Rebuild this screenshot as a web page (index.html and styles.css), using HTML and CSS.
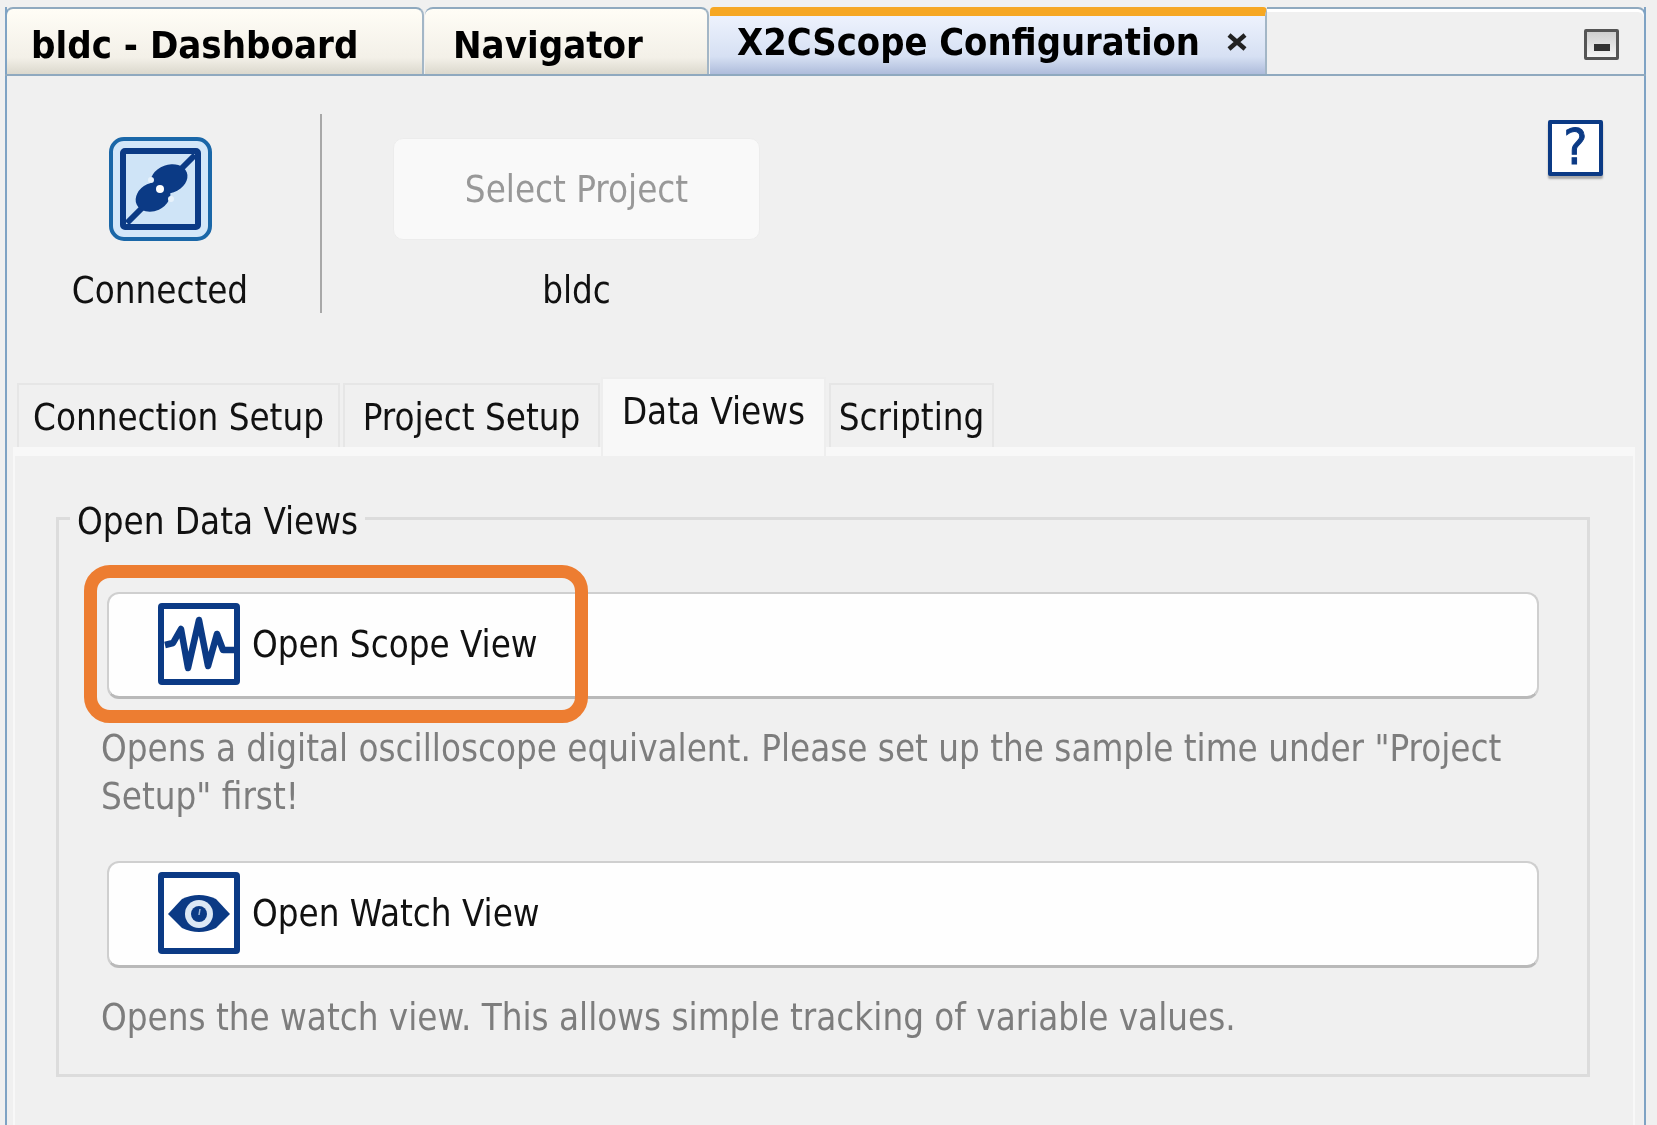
FILE: index.html
```html
<!DOCTYPE html>

<html>

<head>
	<meta http-equiv="content-type" content="text/html; charset=utf-8" />
	<title>X2CScope Configuration</title>
	<link rel="stylesheet" href="styles.css">
</head>

<body>
	<div class="window">
		<div class="tabstrip soft">
			<div class="doc-tab doc-tab-dash">bldc - Dashboard</div>
			<div class="doc-tab doc-tab-nav">Navigator</div>
			<div class="doc-tab doc-tab-active">
				<span>X2CScope Configuration</span>
				<svg class="close-icon" viewBox="0 0 22 18"><path d="M3 2 L19 16 M19 2 L3 16" /></svg>
			</div>
			<div class="strip-rest">
				<div class="minimize"><div class="minimize-dash"></div></div>
			</div>
		</div>

		<div class="toolbar soft">
			<div class="tool-col tool-connect">
				<svg class="connect-icon" viewBox="0 0 103 104">
					<rect x="2" y="2" width="99" height="100" rx="13" fill="#d3e7f9" stroke="#1a67a8" stroke-width="4" />
					<rect x="14" y="14" width="75" height="76" rx="2" fill="#cfe4f7" stroke="#0b3a85" stroke-width="6" />
					<path d="M18 86 L86 18" stroke="#0b3a85" stroke-width="6" />
					<ellipse cx="60" cy="42" rx="19" ry="14" transform="rotate(-20 60 42)" fill="#0b3a85" />
					<ellipse cx="44" cy="60" rx="18" ry="14" transform="rotate(-25 44 60)" fill="#0b3a85" />
					<circle cx="51" cy="52" r="4" fill="#fff" />
					<circle cx="42" cy="43" r="3" fill="#e8f2fb" />
					<circle cx="62" cy="62" r="3" fill="#e8f2fb" />
				</svg>
				<div class="tool-label">Connected</div>
			</div>
			<div class="tool-sep"></div>
			<div class="tool-col tool-project">
				<button class="select-btn" type="button">Select Project</button>
				<div class="tool-label">bldc</div>
			</div>
			<div class="help-icon">?</div>
		</div>

		<div class="subtabs soft">
			<div class="subtab subtab-conn">Connection Setup</div>
			<div class="subtab subtab-proj">Project Setup</div>
			<div class="subtab subtab-active">Data Views</div>
			<div class="subtab subtab-script">Scripting</div>
		</div>

		<div class="panel">
			<div class="group">
				<div class="legend soft">Open Data Views</div>

				<div class="view-row">
					<button class="view-btn soft" type="button">
						<svg class="view-icon" viewBox="0 0 82 82">
							<rect x="3" y="3" width="76" height="76" rx="1" fill="#fff" stroke="#0b3a85" stroke-width="6" />
							<path class="wave" d="M7 42 L15 40 L23 26 L30 65 L41 17 L50 63 L59 31 L65 47 L77 47" />
						</svg>
						<span>Open Scope View</span>
					</button>
					<div class="highlight"></div>
				</div>
				<p class="view-desc soft">Opens a digital oscilloscope equivalent. Please set up the sample time under "Project Setup" first!</p>

				<div class="view-row view-row-watch">
					<button class="view-btn soft" type="button">
						<svg class="view-icon" viewBox="0 0 82 82">
							<rect x="3" y="3" width="76" height="76" rx="1" fill="#fff" stroke="#0b3a85" stroke-width="6" />
							<path d="M10 42 L24 27 Q41 19 58 27 L72 42 L58 56 Q41 64 24 56 Z" fill="#0b3a85" />
							<circle cx="41" cy="42" r="14" fill="#dce8f5" />
							<circle cx="41" cy="42" r="8" fill="#0b3a85" />
							<path d="M42 37 L41 43" stroke="#9db8d8" stroke-width="1.5" />
						</svg>
						<span>Open Watch View</span>
					</button>
				</div>
				<p class="view-desc soft">Opens the watch view. This allows simple tracking of variable values.</p>
			</div>
		</div>
	</div>
</body>

</html>
```

FILE: styles.css
```css
html,
body {
	margin: 0;
	padding: 0;
	height: 1125px;
	overflow: hidden;
	background-color: #f0f0f0;
	font-family: "DejaVu Sans", sans-serif;
	font-stretch: condensed;
	font-size: 36.4px;
	color: #111;
}

/* The source is an enlarged capture, so everything but the callout is slightly soft */
.soft {
	filter: blur(0.7px);
}

/* Outer docked window */
.window {
	margin: 7px 11px 0 5px;
	height: 1118px;
	border-left: 2px solid #7fa3c4;
	border-right: 2px solid #7fa3c4;
	box-sizing: border-box;
}

/* Document tabs */
.tabstrip {
	display: flex;
	height: 67px;
	border-bottom: 2px solid #8fa9bf;
	margin-left: -2px;
	margin-right: -2px;
}

.doc-tab {
	display: flex;
	align-items: center;
	box-sizing: border-box;
	height: 67px;
	padding-top: 6px;
	font-size: 38px;
	font-weight: bold;
	color: #000;
	background: linear-gradient(#fffdf6, #f3f0e8 75%, #dbd8cd);
	border-top: 2px solid #8fa9bf;
	border-right: 2px solid #a3b6c6;
	border-radius: 8px 8px 0 0;
}

.doc-tab-dash {
	width: 419px;
	padding-left: 24px;
	border-left: 2px solid #7fa3c4;
}

.doc-tab-nav {
	width: 284px;
	margin-left: 1px;
	padding-left: 28px;
}

.doc-tab-active {
	width: 557px;
	margin-left: 1px;
	padding: 0 17px 6px 27px;
	justify-content: space-between;
	font-size: 37.7px;
	border-top: 9px solid #f6a723;
	border-radius: 4px 4px 0 0;
	background: linear-gradient(#edf2fd, #d6e0f3 70%, #aebcdb);
}

.close-icon {
	width: 22px;
	height: 18px;
	fill: none;
	stroke: #222;
	stroke-width: 4.5;
}

.strip-rest {
	flex: 1;
	display: flex;
	justify-content: flex-end;
	box-sizing: border-box;
	padding: 20px 25px 0 0;
	border-top: 2px solid #8fa9bf;
	border-right: 2px solid #7fa3c4;
	border-radius: 0 8px 0 0;
	box-shadow: inset 0 3px 0 #fff;
}

.minimize {
	display: flex;
	align-items: flex-end;
	justify-content: center;
	box-sizing: border-box;
	width: 35px;
	height: 31px;
	padding-bottom: 6px;
	border: 3px solid #555;
	border-radius: 2px;
	background: linear-gradient(#cfcfcf, #f5f5f5);
}

.minimize-dash {
	width: 16px;
	height: 7px;
	background-color: #333;
}

/* Connect and project toolbar */
.toolbar {
	position: relative;
	display: flex;
	height: 307px;
	padding-top: 38px;
	box-sizing: border-box;
}

.tool-col {
	display: flex;
	flex-direction: column;
	align-items: center;
}

.tool-connect {
	width: 313px;
	padding: 23px 7px 0 0;
	box-sizing: border-box;
}

.connect-icon {
	width: 103px;
	height: 104px;
}

.tool-label {
	height: 40px;
	line-height: 40px;
	margin-top: 30px;
}

.tool-sep {
	width: 2px;
	height: 199px;
	background-color: #a8a8a8;
}

.tool-project {
	margin-left: 71px;
	padding-top: 24px;
}

.select-btn {
	width: 367px;
	height: 102px;
	background-color: #f9f9f9;
	border: 1px solid #ececec;
	border-radius: 10px;
	font: inherit;
	color: #989898;
}

.tool-project .tool-label {
	margin-top: 31px;
}

.help-icon {
	position: absolute;
	top: 44px;
	right: 41px;
	box-sizing: border-box;
	width: 55px;
	height: 56px;
	background-color: #fff;
	border: 4px solid #0b3a85;
	border-radius: 2px;
	box-shadow: 0 3px 2px #aaa;
	font-size: 50px;
	-webkit-text-stroke: 1px #0b3a85;
	line-height: 46px;
	text-align: center;
	color: #0b3a85;
}

/* Inner tabs */
.subtabs {
	display: flex;
	align-items: flex-end;
	height: 64px;
	padding-left: 10px;
}

.subtab {
	box-sizing: border-box;
	height: 64px;
	padding-top: 11px;
	line-height: 44px;
	text-align: center;
	border: 2px solid #e6e6e6;
	border-bottom: 0;
	background-color: #f0f0f0;
}

.subtab-conn {
	width: 323px;
}

.subtab-proj {
	width: 257px;
	margin-left: 3px;
}

.subtab-active {
	position: relative;
	z-index: 1;
	width: 225px;
	height: 79px;
	margin-left: 1px;
	margin-bottom: -9px;
	background-color: #f8f8f8;
	border-color: #eeeeee;
}

.subtab-script {
	width: 165px;
	margin-left: 3px;
}

.panel {
	margin: 0 9px 0 6px;
	box-sizing: border-box;
	height: 680px;
	padding: 61px 43px 0 41px;
	border-top: 9px solid #f8f8f8;
	border-left: 2px solid #f8f8f8;
	border-right: 2px solid #f8f8f8;
}

/* Group box */
.group {
	position: relative;
	box-sizing: border-box;
	height: 560px;
	padding: 72px 48px 0 48px;
	border: 3px solid #dcdcdc;
}

.legend {
	position: absolute;
	top: -18px;
	left: 11px;
	padding: 0 7px;
	line-height: 40px;
	background-color: #f0f0f0;
}

.view-row {
	position: relative;
}

.view-row-watch {
	margin-top: 40px;
}

.view-btn {
	display: flex;
	align-items: center;
	gap: 12px;
	box-sizing: border-box;
	width: 100%;
	height: 107px;
	padding: 0 0 2px 49px;
	background-color: #fefefe;
	border: 2px solid #cfcfcf;
	border-bottom: 3px solid #b9b9b9;
	border-radius: 12px;
	font: inherit;
	color: #111;
}

.view-icon {
	width: 82px;
	height: 82px;
	flex-shrink: 0;
}

.wave {
	fill: none;
	stroke: #0b3a85;
	stroke-width: 6.5;
	stroke-linejoin: round;
}

/* Callout drawn over the first button */
.highlight {
	position: absolute;
	top: -27px;
	left: -23px;
	width: 504px;
	height: 158px;
	box-sizing: border-box;
	border: 13px solid #ed7d31;
	border-radius: 26px;
}

.view-desc {
	margin: 26px 0 0 -6px;
	line-height: 48px;
	color: #7d7d7d;
}
```
